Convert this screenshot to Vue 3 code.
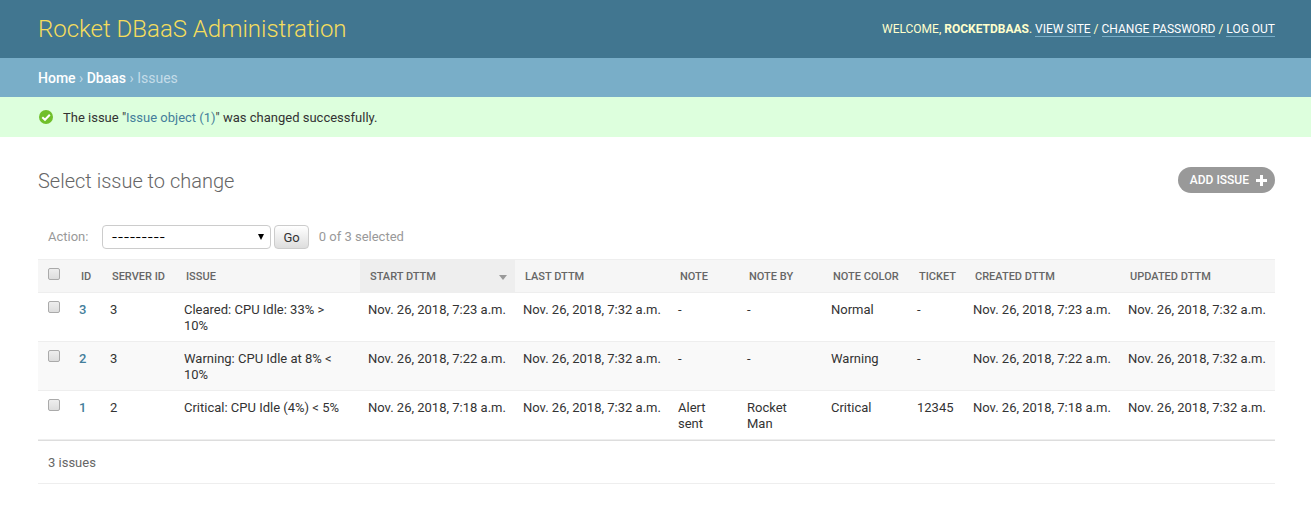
<script setup>
import { computed, ref } from 'vue'

const columns = [
  { label: 'ID', key: 'id' },
  { label: 'Server ID', key: 'server' },
  { label: 'Issue', key: 'issue' },
  { label: 'Start DTTM', key: 'start', sorted: true },
  { label: 'Last DTTM', key: 'last' },
  { label: 'Note', key: 'note' },
  { label: 'Note by', key: 'noteBy' },
  { label: 'Note color', key: 'color' },
  { label: 'Ticket', key: 'ticket' },
  { label: 'Created DTTM', key: 'created' },
  { label: 'Updated DTTM', key: 'updated' },
]

const issues = [
  {
    id: 3, server: 3, issue: 'Cleared: CPU Idle: 33% > 10%',
    start: 'Nov. 26, 2018, 7:23 a.m.', last: 'Nov. 26, 2018, 7:32 a.m.',
    note: '-', noteBy: '-', color: 'Normal', ticket: '-',
    created: 'Nov. 26, 2018, 7:23 a.m.', updated: 'Nov. 26, 2018, 7:32 a.m.',
  },
  {
    id: 2, server: 3, issue: 'Warning: CPU Idle at 8% < 10%',
    start: 'Nov. 26, 2018, 7:22 a.m.', last: 'Nov. 26, 2018, 7:32 a.m.',
    note: '-', noteBy: '-', color: 'Warning', ticket: '-',
    created: 'Nov. 26, 2018, 7:22 a.m.', updated: 'Nov. 26, 2018, 7:32 a.m.',
  },
  {
    id: 1, server: 2, issue: 'Critical: CPU Idle (4%) < 5%',
    start: 'Nov. 26, 2018, 7:18 a.m.', last: 'Nov. 26, 2018, 7:32 a.m.',
    note: 'Alert sent', noteBy: 'Rocket Man', color: 'Critical', ticket: '12345',
    created: 'Nov. 26, 2018, 7:18 a.m.', updated: 'Nov. 26, 2018, 7:32 a.m.',
  },
]

const action = ref('')
const selected = ref([])
const allSelected = computed({
  get: () => selected.value.length === issues.length,
  set: (on) => { selected.value = on ? issues.map((i) => i.id) : [] },
})
</script>

<template>
  <div class="page">
    <header class="header">
      <h1 class="brand"><a href="#">Rocket DBaaS Administration</a></h1>
      <div class="user-tools">
        Welcome, <strong>rocketdbaas</strong>.
        <a href="#">View site</a> / <a href="#">Change password</a> / <a href="#">Log out</a>
      </div>
    </header>

    <nav class="breadcrumbs" aria-label="Breadcrumbs">
      <a href="#">Home</a> › <a href="#">Dbaas</a> › Issues
    </nav>

    <div class="message" role="status">
      <svg class="message-icon" viewBox="0 0 14 14" aria-hidden="true">
        <circle cx="7" cy="7" r="7" fill="#70bf2b" />
        <path d="M3.3 7.2 6 9.8 10.8 4.8" fill="none" stroke="#fff" stroke-width="2" />
      </svg>
      <span>The issue "<a href="#">Issue object (1)</a>" was changed successfully.</span>
    </div>

    <main class="content">
      <div class="title-row">
        <h2 class="title">Select issue to change</h2>
        <a class="add" href="#">
          Add issue
          <svg class="add-icon" viewBox="0 0 11 11" aria-hidden="true">
            <path d="M4 0h3v4h4v3H7v4H4V7H0V4h4z" fill="#fff" />
          </svg>
        </a>
      </div>

      <form @submit.prevent>
        <div class="actions">
          <label for="action">Action:</label>
          <span class="select">
            <select id="action" v-model="action">
              <option value="">---------</option>
              <option value="delete">Delete selected issues</option>
            </select>
            <svg class="select-arrow" viewBox="0 0 6 6" aria-hidden="true">
              <path d="M0 0h6L3 6z" fill="#000" />
            </svg>
          </span>
          <button class="go" type="submit">Go</button>
          <span class="counter">{{ selected.length }} of {{ issues.length }} selected</span>
        </div>

        <table class="results">
          <colgroup>
            <col class="c-check"><col class="c-id"><col class="c-server"><col class="c-issue">
            <col class="c-date"><col class="c-date"><col class="c-note"><col class="c-by">
            <col class="c-color"><col class="c-ticket"><col class="c-date"><col class="c-date">
          </colgroup>
          <thead>
            <tr>
              <th scope="col" class="check">
                <input v-model="allSelected" type="checkbox" aria-label="Select all issues">
              </th>
              <th v-for="c in columns" :key="c.key" scope="col" :class="{ sorted: c.sorted }">
                <div class="th">
                  <a href="#">{{ c.label }}</a>
                  <svg v-if="c.sorted" class="sort" viewBox="0 0 8 5" aria-hidden="true">
                    <path d="M0 0h8L4 5z" fill="#999" />
                  </svg>
                </div>
              </th>
            </tr>
          </thead>
          <tbody>
            <tr v-for="row in issues" :key="row.id">
              <td class="check">
                <input v-model="selected" type="checkbox" :value="row.id" :aria-label="`Select issue ${row.id}`">
              </td>
              <template v-for="c in columns" :key="c.key">
                <th v-if="c.key === 'id'" scope="row"><a href="#">{{ row.id }}</a></th>
                <td v-else :class="{ wide: c.key === 'issue' }">{{ row[c.key] }}</td>
              </template>
            </tr>
          </tbody>
        </table>

        <p class="paginator">{{ issues.length }} issues</p>
      </form>
    </main>
  </div>
</template>

<style>
body {
  margin: 0;
  background: #fff;
}
</style>

<style scoped>
.page {
  font-family: Roboto, "Liberation Sans", sans-serif;
  font-size: 13px;
  line-height: 16px;
  color: #333;
}
a {
  color: #447e9b;
  text-decoration: none;
}
.header {
  display: flex;
  align-items: center;
  justify-content: space-between;
  padding: 14px 36px 14px 38px;
  background: #417690;
}
.brand {
  margin: 0;
  font-size: 24px;
  line-height: 30px;
  font-weight: 300;
}
.brand a {
  color: #f5dd5d;
}
.user-tools {
  font-size: 12px;
  line-height: 16px;
  color: #ffc;
  text-transform: uppercase;
}
.user-tools a {
  color: #fff;
  border-bottom: 1px solid #79aec8;
}
.breadcrumbs {
  padding: 11px 38px 9px;
  background: #79aec8;
  color: #c4dce8;
  font-size: 14px;
  line-height: 19px;
}
.breadcrumbs a {
  color: #fff;
  font-weight: 500;
}
.message {
  display: flex;
  align-items: flex-start;
  gap: 10px;
  padding: 13px 39px 11px;
  background: #dfd;
}
.message-icon {
  width: 14px;
  height: 14px;
}
.content {
  padding: 30px 36px 40px 38px;
}
.title-row {
  display: flex;
  justify-content: space-between;
  align-items: flex-start;
}
.title {
  margin: 0;
  font-size: 20px;
  line-height: 28px;
  font-weight: 300;
  color: #666;
}
.add {
  display: flex;
  align-items: center;
  gap: 7px;
  padding: 5px 8px 5px 12px;
  border-radius: 15px;
  background: #999;
  color: #fff;
  font-size: 12px;
  font-weight: 500;
  text-transform: uppercase;
}
.add-icon {
  width: 11px;
  height: 11px;
}
.actions {
  display: flex;
  align-items: center;
  padding: 30px 10px 10px;
  color: #999;
}
.select {
  position: relative;
  margin: 0 3px 0 14px;
}
select {
  display: block;
  appearance: none;
  width: 169px;
  height: 24px;
  padding: 0 8px;
  border: 1px solid #ccc;
  border-radius: 4px;
  background: #fff;
  color: #000;
  font: 13px Inter, Roboto, sans-serif;
}
.select-arrow {
  position: absolute;
  right: 7px;
  top: 9px;
  width: 6px;
  height: 6px;
  pointer-events: none;
}
.go {
  height: 24px;
  padding: 0 8px;
  border: 1px solid #ccc;
  border-radius: 4px;
  background: linear-gradient(#fff, #ddd);
  color: #333;
  font: 13px Roboto, sans-serif;
}
.counter {
  margin-left: 10px;
}
.results {
  width: 100%;
  table-layout: fixed;
  border-collapse: separate;
  border-spacing: 0;
}
.c-check { width: 33px; }
.c-id { width: 31px; }
.c-server { width: 74px; }
.c-issue { width: 184px; }
.c-date { width: 155px; }
.c-note { width: 69px; }
.c-by { width: 84px; }
.c-color { width: 86px; }
.c-ticket { width: 56px; }
.results th,
.results td {
  box-sizing: border-box;
  padding: 9px 8px 7px;
  border-bottom: 1px solid #eee;
  text-align: left;
  vertical-align: top;
}
.results thead th {
  padding-left: 10px;
  border-top: 1px solid #eee;
  background: #f6f6f6;
  font-size: 11px;
  font-weight: 500;
  text-transform: uppercase;
  white-space: nowrap;
}
.results thead th.sorted {
  background: #eee;
}
.th {
  display: flex;
  align-items: center;
  justify-content: space-between;
}
thead a {
  color: #666;
}
.sort {
  width: 8px;
  height: 5px;
}
.results tbody th {
  font-weight: 500;
}
.results td.wide {
  padding-right: 18px;
}
tbody tr:nth-child(even) {
  background: #f9f9f9;
}
.results .check {
  padding-top: 8px;
  padding-left: 10px;
}
input[type="checkbox"] {
  display: block;
  appearance: none;
  box-sizing: border-box;
  width: 12px;
  height: 12px;
  margin: 0;
  border: 1px solid #aaa;
  border-radius: 2px;
  background: linear-gradient(#eee, #ddd);
}
input[type="checkbox"]:checked {
  background: #447e9b;
}
.paginator {
  margin: 0;
  padding: 14px 10px 12px;
  border-top: 1px solid #ddd;
  border-bottom: 1px solid #eee;
  color: #666;
}
</style>
